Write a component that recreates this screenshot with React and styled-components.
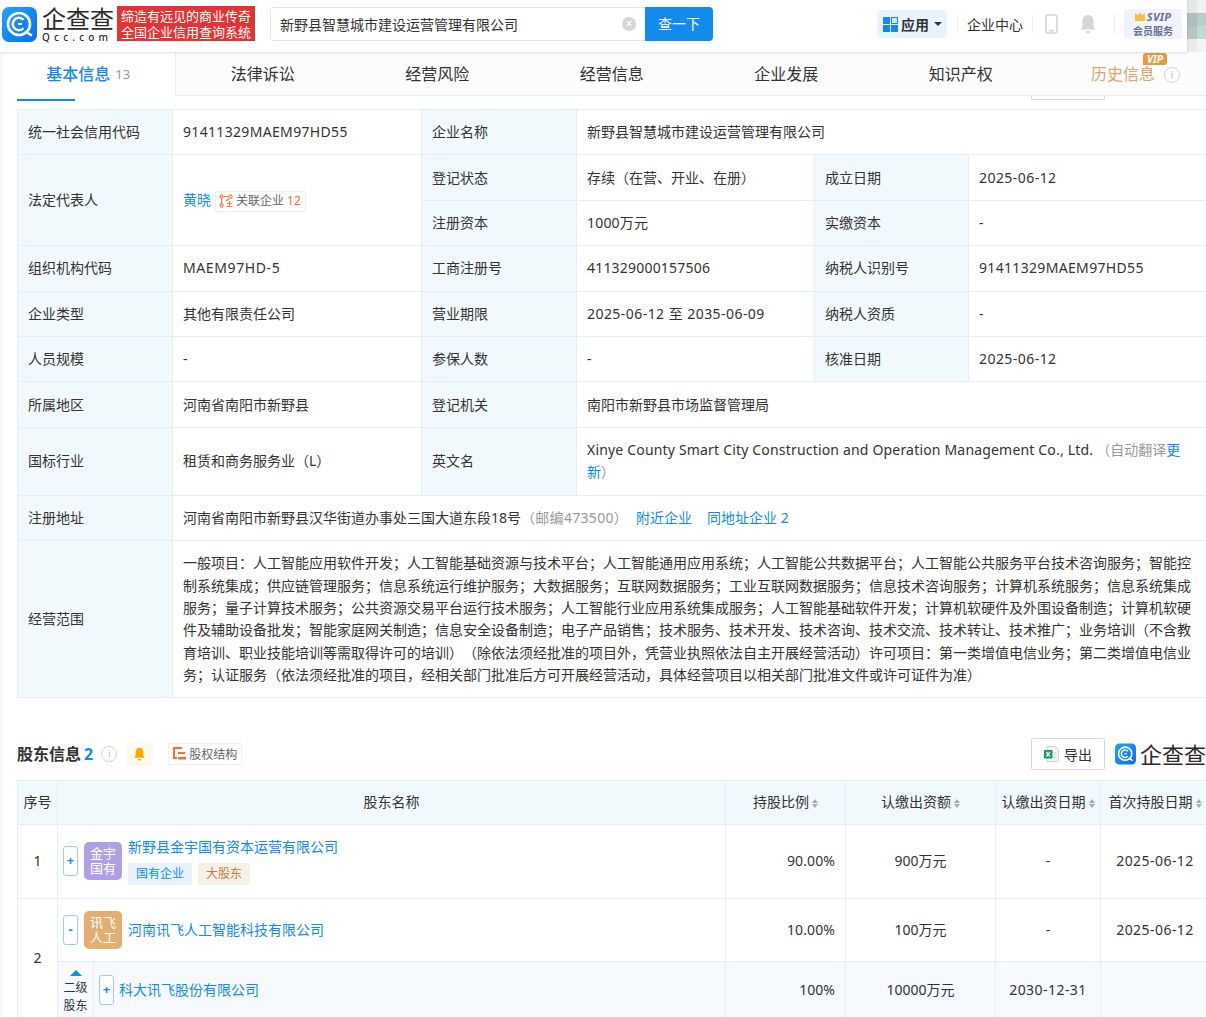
import React from "react";
import styled, { createGlobalStyle } from "styled-components";

const GlobalStyle = createGlobalStyle`
  html, body {
    margin: 0;
    padding: 0;
    background: #fff;
    overflow: hidden;
  }
  body {
    font-family: "Noto Sans", "Noto Sans CJK SC", sans-serif;
    font-size: 14px;
    color: #333;
    text-spacing-trim: space-all;
  }
  * { box-sizing: border-box; }
`;

const QccIcon = ({ size = 35, id = "qcc" }) => (
  <svg width={size} height={size} viewBox="0 0 35 35">
    <defs>
      <linearGradient id={id} x1="0" y1="0" x2="1" y2="1">
        <stop offset="0" stopColor="#1fa6f5" />
        <stop offset="1" stopColor="#0a6cf0" />
      </linearGradient>
    </defs>
    <rect width="35" height="35" rx="7" fill={`url(#${id})`} />
    <circle cx="17" cy="17" r="11" fill="none" stroke="#fff" strokeWidth="2.6" />
    <path d="M21.5 12.8a6.2 6.2 0 1 0 0 8.4" fill="none" stroke="#fff" strokeWidth="2.4" />
    <path d="M20 17h-4" stroke="#fff" strokeWidth="2" />
    <path d="M24 25l5 3" stroke="#fff" strokeWidth="2.6" strokeLinecap="round" />
  </svg>
);

const Page = styled.div`
  width: 1206px;
  height: 1017px;
  overflow: hidden;
  position: relative;
`;

const Header = styled.header`
  width: 1187px;
  height: 52px;
  display: flex;
  align-items: center;
  padding-left: 2px;
  background: #fff;
  box-shadow: 0 1px 3px rgba(0, 0, 0, 0.12);
  position: relative;
  z-index: 2;
`;

const Mosaic = styled.div`
  position: absolute;
  right: 0;
  top: 0;
  width: 19px;
  height: 52px;
  display: grid;
  grid-template-columns: repeat(2, 1fr);
  grid-template-rows: repeat(4, 13px);
`;

const MosaicCell = styled.div`
  background: ${(p) => p.$c};
`;

const LogoWrap = styled.div`
  display: flex;
  align-items: center;
  gap: 5px;
  width: 115px;
  margin-top: -4px;
`;

const LogoText = styled.div`
  display: flex;
  flex-direction: column;
  line-height: 1;
  color: #2b2b2b;
`;

const LogoName = styled.span`
  font-size: 24px;
  line-height: 26px;
  font-weight: 400;
  white-space: nowrap;
`;

const LogoSub = styled.span`
  font-size: 10px;
  line-height: 10px;
  letter-spacing: 4.2px;
  white-space: nowrap;
  font-weight: 500;
`;

const Slogan = styled.div`
  width: 138px;
  height: 35px;
  background: #e23434;
  color: #fff;
  font-size: 13px;
  line-height: 16px;
  padding: 2px 0 0 4px;
  white-space: nowrap;
  margin-top: -5px;
`;

const Search = styled.div`
  width: 443px;
  height: 34px;
  margin-left: 15px;
  margin-top: -4px;
  display: flex;
`;

const SearchInput = styled.div`
  flex: 1;
  border: 1px solid #e4e7ea;
  border-right: none;
  border-radius: 4px 0 0 4px;
  display: flex;
  align-items: center;
  justify-content: space-between;
  padding: 0 9px 0 9px;
  color: #333;
`;

const ClearDot = styled.span`
  width: 14px;
  height: 14px;
  border-radius: 50%;
  background: #d4d6d9;
  color: #fff;
  font-size: 12px;
  line-height: 14px;
  text-align: center;
`;

const SearchBtn = styled.div`
  width: 68px;
  background: #128bed;
  color: #fff;
  border-radius: 0 4px 4px 0;
  text-align: center;
  line-height: 34px;
`;

const HeaderRight = styled.div`
  margin-left: auto;
  margin-top: -4px;
  display: flex;
  align-items: center;
  padding-right: 5px;
`;

const AppBtn = styled.div`
  width: 70px;
  height: 28px;
  background: #e9f3fe;
  border-radius: 4px;
  display: flex;
  align-items: center;
  gap: 3px;
  padding-left: 6px;
  font-weight: 700;
  font-size: 14px;
`;

const Caret = styled.span`
  width: 0;
  height: 0;
  border-left: 4px solid transparent;
  border-right: 4px solid transparent;
  border-top: 4px solid #333;
  margin-left: 2px;
`;

const HeadSep = styled.span`
  width: 1px;
  height: 18px;
  background: #eee;
  margin: ${(p) => p.$m};
`;

const CenterLink = styled.span`
  font-size: 14px;
  white-space: nowrap;
`;

const HeaderBell = styled.svg`
  margin-left: 21px;
`;

const Svip = styled.div`
  width: 58px;
  height: 30px;
  background: #f1f2fb;
  border-radius: 3px;
  display: flex;
  flex-direction: column;
  align-items: center;
  color: #6a7195;
  font-size: 10px;
  line-height: 14px;
  font-weight: 700;
  padding-top: 1px;
`;

const SvipTop = styled.span`
  font-style: italic;
  font-size: 11px;
  letter-spacing: 0.3px;
  display: flex;
  align-items: center;
  gap: 2px;
`;

const Tabs = styled.nav`
  height: 44px;
  display: flex;
  background: #fcfcfc;
  border-bottom: 1px solid #eee;
  border-left: 2px solid #f7f7f7;
  position: relative;
  z-index: 1;
`;

const Tab = styled.div`
  width: ${(p) => p.$w || "174.5px"};
  height: ${(p) => (p.$active ? "44px" : "43px")};
  display: flex;
  justify-content: center;
  align-items: center;
  font-size: 16px;
  position: relative;
  white-space: nowrap;
  color: ${(p) => p.$color || "#333"};
  background: ${(p) => (p.$active ? "#fff" : "transparent")};
  border-right: ${(p) => (p.$active ? "1px solid #eee" : "none")};
  font-weight: ${(p) => (p.$active ? 500 : 400)};
  padding-bottom: 2px;
  ${(p) => p.$active && "color: #128bed;"}
`;

const TabCount = styled.span`
  font-size: 13px;
  color: #999;
  font-weight: 400;
  margin-left: 5px;
  padding-top: 2px;
`;

const ActiveLine = styled.span`
  position: absolute;
  left: 15px;
  bottom: -5px;
  width: 58px;
  height: 2px;
  background: #128bed;
`;

const VipBadge = styled.span`
  position: absolute;
  left: 1141px;
  top: 1px;
  width: 24px;
  height: 12px;
  background: #e89a3c;
  border-radius: 3px 3px 3px 0;
  color: #fff;
  font-size: 10px;
  line-height: 12px;
  font-weight: 700;
  font-style: italic;
  text-align: center;
`;

const InfoCircle = styled.span`
  width: 16px;
  height: 16px;
  border-radius: 50%;
  border: 1.5px solid #d6d6d6;
  color: #c4c4c4;
  font-size: 11px;
  line-height: 13px;
  text-align: center;
  font-family: "Liberation Serif", serif;
  display: inline-block;
  flex: none;
`;

const TabInfo = styled(InfoCircle)`
  position: absolute;
  left: 1162px;
  top: 15px;
`;

const Stub = styled.div`
  height: 13px;
  display: flex;
  justify-content: flex-end;
  padding-right: 101px;
  border-left: 2px solid #f7f7f7;
`;

const StubBtn = styled.div`
  width: 74px;
  height: 4px;
  border: 1px solid #d8d8d8;
  border-top: none;
  border-radius: 0 0 2px 2px;
`;

const Main = styled.main`
  padding-left: 15px;
  border-left: 2px solid #f7f7f7;
`;

const Table = styled.table`
  border-collapse: collapse;
  table-layout: fixed;
  width: ${(p) => p.$w}px;
`;

const Th = styled.td`
  background: #f2f9fc;
  border: 1px solid #e4eef6;
  padding: 0 10px;
  color: #333;
  font-size: 14px;
  line-height: 22px;
  height: ${(p) => p.$h || 45.4}px;
`;

const Td = styled.td`
  border: 1px solid #e4eef6;
  padding: 0 10px;
  color: #333;
  font-size: 14px;
  line-height: 22px;
  height: ${(p) => p.$h || 45.4}px;
`;

const ScopeTd = styled(Td)`
  line-height: 22.4px;
  padding: 11px 10px 10px;
`;

const ScopeText = styled.div`
  width: 1008px;
  text-align: justify;
`;

const Num = styled.span`
  letter-spacing: ${(p) => p.$ls ?? 0.45}px;
`;

const Link = styled.span`
  color: #128bed;
`;

const Muted = styled.span`
  color: #999;
`;

const AutoNote = styled(Muted)`
  margin-left: 3px;
`;

const LinkSpaced = styled(Link)`
  margin-left: ${(p) => p.$ml || 15}px;
`;

const RelatedTag = styled.span`
  display: inline-flex;
  align-items: center;
  height: 21px;
  padding: 0 4px 0 3px;
  margin-left: 4px;
  border: 1px solid #eee;
  border-radius: 2px;
  font-size: 12px;
  color: #666;
  gap: 3px;
  vertical-align: middle;
`;

const Orange = styled.span`
  color: #ff6b35;
`;

const SectionHead = styled.div`
  height: 82px;
  padding-top: 40px;
  display: flex;
  align-items: flex-start;
  width: 1189px;
`;

const SectionTitle = styled.h3`
  margin: 0;
  font-size: 16px;
  line-height: 32px;
  font-weight: 700;
  color: #333;
  white-space: nowrap;
`;

const TitleCount = styled.span`
  color: #128bed;
  margin-left: 3px;
`;

const SectionInfo = styled(InfoCircle)`
  margin: 8px 0 0 8px;
`;

const BellBox = styled.span`
  width: 27px;
  height: 22px;
  background: #fff8ec;
  border-radius: 3px;
  margin: 5px 0 0 9px;
  display: flex;
  justify-content: center;
  align-items: center;
`;

const StructBtn = styled.span`
  height: 22px;
  margin: 5px 0 0 15px;
  padding: 0 4px;
  border: 1px solid #eee;
  border-radius: 2px;
  font-size: 12px;
  color: #666;
  display: flex;
  align-items: center;
  gap: 3px;
  white-space: nowrap;
`;

const ExportBtn = styled.div`
  width: 74px;
  height: 32px;
  margin-left: auto;
  border: 1px solid #d8d8d8;
  border-radius: 2px;
  display: flex;
  justify-content: center;
  align-items: center;
  gap: 5px;
  font-size: 14px;
  color: #333;
  background: #fff;
`;

const SideLogo = styled.div`
  display: flex;
  align-items: center;
  gap: 4px;
  margin-left: 10px;
  flex: none;
  width: 91px;
  overflow: hidden;
`;

const SideLogoText = styled.span`
  font-size: 22px;
  line-height: 32px;
  color: #2b2b2b;
  white-space: nowrap;
`;

const HeadCell = styled(Th)`
  height: 44px;
  text-align: center;
  padding: 0;
  white-space: nowrap;
`;

const Sort = styled.span`
  display: inline-flex;
  flex-direction: column;
  gap: 1px;
  margin-left: 3px;
  vertical-align: middle;
`;

const SortUp = styled.i`
  border-left: 3px solid transparent;
  border-right: 3px solid transparent;
  border-bottom: 4px solid #aaa;
`;

const SortDown = styled.i`
  border-left: 3px solid transparent;
  border-right: 3px solid transparent;
  border-top: 4px solid #aaa;
`;

const Center = styled(Td)`
  text-align: center;
  padding: 0;
  background: ${(p) => p.$bg || "#fff"};
`;

const Ratio = styled(Td)`
  text-align: right;
  background: ${(p) => p.$bg || "#fff"};
`;

const NameTd = styled(Td)`
  padding: 0 0 0 5px;
  background: ${(p) => p.$bg || "#fff"};
`;

const NameRow = styled.div`
  display: flex;
  align-items: center;
`;

const Expand = styled.span`
  width: 15px;
  height: 30px;
  border: 1px solid #9ccaf3;
  border-radius: 3px;
  color: #128bed;
  background: #fff;
  font-size: 13px;
  font-weight: 700;
  line-height: 27px;
  text-align: center;
  flex: none;
`;

const Avatar = styled.span`
  width: 38px;
  height: 38px;
  border-radius: 5px;
  margin: 0 6px 0 6px;
  background: ${(p) => p.$c};
  color: #fff;
  font-size: 13px;
  line-height: 15px;
  display: flex;
  justify-content: center;
  align-items: center;
  text-align: center;
  padding: 0 5px;
  flex: none;
`;

const NameLines = styled.div`
  display: flex;
  flex-direction: column;
  gap: 5px;
  margin-top: -1px;
`;

const Tags = styled.div`
  display: flex;
  gap: 6px;
`;

const Tag = styled.span`
  height: 22px;
  padding: 0 8px;
  border-radius: 2px;
  font-size: 12px;
  line-height: 22px;
  color: ${(p) => p.$c};
  background: ${(p) => p.$bg};
`;

const SubCell = styled.div`
  display: flex;
  align-items: center;
  height: 56px;
  margin-left: -5px;
`;

const Level = styled.div`
  width: 36px;
  height: 100%;
  border-right: 1px solid #e4eef6;
  display: flex;
  flex-direction: column;
  align-items: center;
  font-size: 12px;
  line-height: 18.5px;
  padding-top: 8px;
  margin-right: 5px;
  flex: none;
`;

const LevelCaret = styled.i`
  border-left: 6px solid transparent;
  border-right: 6px solid transparent;
  border-bottom: 6px solid #128bed;
  margin-bottom: 3px;
`;

const SubName = styled(Link)`
  margin-left: 5px;
`;

const basics = [
  [
    "组织机构代码",
    <Num $ls={0.6}>MAEM97HD-5</Num>,
    "工商注册号",
    <Num $ls={0.2}>411329000157506</Num>,
    "纳税人识别号",
    <Num $ls={0.33}>91411329MAEM97HD55</Num>,
  ],
  ["企业类型", "其他有限责任公司", "营业期限", <Num>2025-06-12 至 2035-06-09</Num>, "纳税人资质", "-"],
  ["人员规模", "-", "参保人数", "-", "核准日期", <Num>2025-06-12</Num>],
];

const scope =
  "一般项目：人工智能应用软件开发；人工智能基础资源与技术平台；人工智能通用应用系统；人工智能公共数据平台；人工智能公共服务平台技术咨询服务；智能控制系统集成；供应链管理服务；信息系统运行维护服务；大数据服务；互联网数据服务；工业互联网数据服务；信息技术咨询服务；计算机系统服务；信息系统集成服务；量子计算技术服务；公共资源交易平台运行技术服务；人工智能行业应用系统集成服务；人工智能基础软件开发；计算机软硬件及外围设备制造；计算机软硬件及辅助设备批发；智能家庭网关制造；信息安全设备制造；电子产品销售；技术服务、技术开发、技术咨询、技术交流、技术转让、技术推广；业务培训（不含教育培训、职业技能培训等需取得许可的培训）（除依法须经批准的项目外，凭营业执照依法自主开展经营活动）许可项目：第一类增值电信业务；第二类增值电信业务；认证服务（依法须经批准的项目，经相关部门批准后方可开展经营活动，具体经营项目以相关部门批准文件或许可证件为准）";

const mosaic = ["#e4e8e6", "#f0f0ee", "#aebfba", "#b9cdc8", "#b3c6c2", "#c6d6d2", "#e8ecea", "#f4f4f2"];

const SortIcon = () => (
  <Sort>
    <SortUp />
    <SortDown />
  </Sort>
);

const SUB_BG = "#f6fafe";

export default function App() {
  return (
    <Page>
      <GlobalStyle />
      <Header>
        <LogoWrap>
          <QccIcon />
          <LogoText>
            <LogoName>企查查</LogoName>
            <LogoSub>Qcc.com</LogoSub>
          </LogoText>
        </LogoWrap>
        <Slogan>
          缔造有远见的商业传奇
          <br />
          全国企业信用查询系统
        </Slogan>
        <Search>
          <SearchInput>
            新野县智慧城市建设运营管理有限公司
            <ClearDot>×</ClearDot>
          </SearchInput>
          <SearchBtn>查一下</SearchBtn>
        </Search>
        <HeaderRight>
          <AppBtn>
            <svg width="15" height="15" viewBox="0 0 15 15">
              <rect width="7" height="7" fill="#128bed" />
              <rect x="8.5" y="0.5" width="6" height="6" fill="#cfe6fb" stroke="#128bed" />
              <rect y="8" width="7" height="7" fill="#128bed" />
              <rect x="8" y="8" width="7" height="7" fill="#128bed" />
            </svg>
            应用
            <Caret />
          </AppBtn>
          <HeadSep $m="0 9px 0 10px" />
          <CenterLink>企业中心</CenterLink>
          <HeadSep $m="0 12px 0 9px" />
          <svg width="13" height="20" viewBox="0 0 13 20">
            <rect x="1" y="1" width="11" height="18" rx="2" fill="#fff" stroke="#d4d4d4" strokeWidth="1.6" />
            <rect x="4" y="16" width="5" height="1.5" fill="#d4d4d4" />
          </svg>
          <HeaderBell width="18" height="20" viewBox="0 0 18 20">
            <path d="M9 1c3.6 0 5.5 2.8 5.5 6v5l2 3.5h-15l2-3.5V7c0-3.2 1.9-6 5.5-6z" fill="#d6d6d6" />
            <path d="M6.5 17h5a2.5 2.5 0 0 1-5 0z" fill="#d6d6d6" />
          </HeaderBell>
          <HeadSep $m="0 9px 0 17px" />
          <Svip>
            <SvipTop>
              <svg width="10" height="8" viewBox="0 0 10 8">
                <path d="M0 0l2.5 2L5 0l2.5 2L10 0v8H0z" fill="#f2c43c" />
              </svg>
              SVIP
            </SvipTop>
            会员服务
          </Svip>
        </HeaderRight>
      </Header>
      <Mosaic>
        {mosaic.map((c, i) => (
          <MosaicCell key={i} $c={c} />
        ))}
      </Mosaic>
      <Tabs>
        <Tab $active $w="173.5px">
          基本信息<TabCount>13</TabCount>
          <ActiveLine />
        </Tab>
        <Tab>法律诉讼</Tab>
        <Tab>经营风险</Tab>
        <Tab>经营信息</Tab>
        <Tab>企业发展</Tab>
        <Tab>知识产权</Tab>
        <Tab $color="#d9a66f" $w="150px">历史信息</Tab>
        <VipBadge>VIP</VipBadge>
        <TabInfo>i</TabInfo>
      </Tabs>
      <Stub>
        <StubBtn />
      </Stub>
      <Main>
        <Table $w={1200}>
          <colgroup>
            <col width="155" />
            <col width="249" />
            <col width="155" />
            <col width="238" />
            <col width="154" />
            <col width="249" />
          </colgroup>
          <tbody>
            <tr>
              <Th>统一社会信用代码</Th>
              <Td><Num $ls={0.33}>91411329MAEM97HD55</Num></Td>
              <Th>企业名称</Th>
              <Td colSpan={3}>新野县智慧城市建设运营管理有限公司</Td>
            </tr>
            <tr>
              <Th rowSpan={2}>法定代表人</Th>
              <Td rowSpan={2}>
                <Link>黄晓</Link>
                <RelatedTag>
                  <svg width="14" height="14" viewBox="0 0 14 14" fill="none" stroke="#ff7a45" strokeWidth="1.2">
                    <circle cx="2.5" cy="2.5" r="1.6" />
                    <circle cx="11.5" cy="2.5" r="1.6" />
                    <circle cx="2.5" cy="11.5" r="1.6" />
                    <path d="M4.2 2.5h5.6M2.5 4.2v5.6M7 7l3-2.5M10.5 7v5M7.5 12.5h6M8 9.500h5" />
                  </svg>
                  关联企业 <Orange>12</Orange>
                </RelatedTag>
              </Td>
              <Th>登记状态</Th>
              <Td>存续（在营、开业、在册）</Td>
              <Th>成立日期</Th>
              <Td><Num>2025-06-12</Num></Td>
            </tr>
            <tr>
              <Th>注册资本</Th>
              <Td><Num $ls={0.2}>1000万元</Num></Td>
              <Th>实缴资本</Th>
              <Td>-</Td>
            </tr>
            {basics.map((r) => (
              <tr key={r[0]}>
                <Th>{r[0]}</Th>
                <Td>{r[1]}</Td>
                <Th>{r[2]}</Th>
                <Td>{r[3]}</Td>
                <Th>{r[4]}</Th>
                <Td>{r[5]}</Td>
              </tr>
            ))}
            <tr>
              <Th>所属地区</Th>
              <Td>河南省南阳市新野县</Td>
              <Th>登记机关</Th>
              <Td colSpan={3}>南阳市新野县市场监督管理局</Td>
            </tr>
            <tr>
              <Th $h={68}>国标行业</Th>
              <Td $h={68}>租赁和商务服务业（L）</Td>
              <Th $h={68}>英文名</Th>
              <Td $h={68} colSpan={3}>
                <Num $ls={0.18}>Xinye County Smart City Construction and Operation Management Co., Ltd.</Num>
                <AutoNote>（自动翻译</AutoNote>
                <Link>更</Link>
                <br />
                <Link>新</Link>
                <Muted>）</Muted>
              </Td>
            </tr>
            <tr>
              <Th>注册地址</Th>
              <Td colSpan={5}>
                河南省南阳市新野县汉华街道办事处三国大道东段18号
                <Muted><Num $ls={0.3}>（邮编473500）</Num></Muted>
                <LinkSpaced $ml={8}>附近企业</LinkSpaced>
                <LinkSpaced>同地址企业 2</LinkSpaced>
              </Td>
            </tr>
            <tr>
              <Th>经营范围</Th>
              <ScopeTd colSpan={5}>
                <ScopeText>{scope}</ScopeText>
              </ScopeTd>
            </tr>
          </tbody>
        </Table>
        <SectionHead>
          <SectionTitle>
            股东信息<TitleCount>2</TitleCount>
          </SectionTitle>
          <SectionInfo>i</SectionInfo>
          <BellBox>
            <svg width="13" height="14" viewBox="0 0 18 20">
              <path d="M9 1c3.6 0 5.5 2.8 5.5 6v5l2 3.5h-15l2-3.5V7c0-3.2 1.9-6 5.5-6z" fill="#ffa800" />
              <path d="M6.5 17h5a2.5 2.5 0 0 1-5 0z" fill="#ffa800" />
            </svg>
          </BellBox>
          <StructBtn>
            <svg width="13" height="13" viewBox="0 0 13 13" fill="#ff6b35">
              <rect width="9" height="2" />
              <rect width="2" height="12" />
              <rect x="5" y="5" width="7" height="2" />
              <rect x="5" y="10" width="8" height="2.5" />
              <rect y="10" width="4" height="2" />
            </svg>
            股权结构
          </StructBtn>
          <ExportBtn>
            <svg width="15" height="16" viewBox="0 0 15 16">
              <path d="M3 0.5h8l3.5 3v12H3z" fill="#f3f4f3" stroke="#c9c9c9" strokeWidth="0.8" />
              <path d="M9.5 6.500h3M9.5 9h3M9.5 11.500h3" stroke="#c9c9c9" strokeWidth="0.8" />
              <rect y="4" width="8.5" height="8.5" fill="#18a05a" />
              <path d="M2.3 6l3.7 4.500M6 6l-3.7 4.500" stroke="#fff" strokeWidth="1.2" />
            </svg>
            导出
          </ExportBtn>
          <SideLogo>
            <QccIcon size={24} id="qcc-side" />
            <SideLogoText>企查查</SideLogoText>
          </SideLogo>
        </SectionHead>
        <Table $w={1192}>
          <colgroup>
            <col width="40" />
            <col width="668" />
            <col width="120" />
            <col width="150" />
            <col width="105" />
            <col width="109" />
          </colgroup>
          <tbody>
            <tr>
              <HeadCell>序号</HeadCell>
              <HeadCell>股东名称</HeadCell>
              <HeadCell>持股比例<SortIcon /></HeadCell>
              <HeadCell>认缴出资额<SortIcon /></HeadCell>
              <HeadCell>认缴出资日期<SortIcon /></HeadCell>
              <HeadCell>首次持股日期<SortIcon /></HeadCell>
            </tr>
            <tr>
              <Center $h={74}>1</Center>
              <NameTd $h={74}>
                <NameRow>
                  <Expand>+</Expand>
                  <Avatar $c="#b09fe2">金宇国有</Avatar>
                  <NameLines>
                    <Link>新野县金宇国有资本运营有限公司</Link>
                    <Tags>
                      <Tag $c="#128bed" $bg="#e7f2fb">国有企业</Tag>
                      <Tag $c="#bb833d" $bg="#f6f0e7">大股东</Tag>
                    </Tags>
                  </NameLines>
                </NameRow>
              </NameTd>
              <Ratio $h={74}><Num $ls={0.1}>90.00%</Num></Ratio>
              <Center $h={74}>900万元</Center>
              <Center $h={74}>-</Center>
              <Center $h={74}><Num>2025-06-12</Num></Center>
            </tr>
            <tr>
              <Center rowSpan={2}>2</Center>
              <NameTd $h={63}>
                <NameRow>
                  <Expand>-</Expand>
                  <Avatar $c="#e3af70">讯飞人工</Avatar>
                  <Link>河南讯飞人工智能科技有限公司</Link>
                </NameRow>
              </NameTd>
              <Ratio $h={63}><Num $ls={0.1}>10.00%</Num></Ratio>
              <Center $h={63}>100万元</Center>
              <Center $h={63}>-</Center>
              <Center $h={63}><Num>2025-06-12</Num></Center>
            </tr>
            <tr>
              <NameTd $h={56} $bg={SUB_BG}>
                <SubCell>
                  <Level>
                    <LevelCaret />
                    二级
                    <br />
                    股东
                  </Level>
                  <Expand>+</Expand>
                  <SubName>科大讯飞股份有限公司</SubName>
                </SubCell>
              </NameTd>
              <Ratio $h={56} $bg={SUB_BG}>100%</Ratio>
              <Center $h={56} $bg={SUB_BG}>10000万元</Center>
              <Center $h={56} $bg={SUB_BG}><Num>2030-12-31</Num></Center>
              <Center $h={56} $bg={SUB_BG} />
            </tr>
          </tbody>
        </Table>
      </Main>
    </Page>
  );
}
